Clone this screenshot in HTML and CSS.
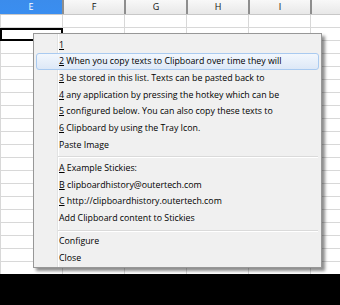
FILE: index.html
```html
<!DOCTYPE html>
<html>
<head>
<meta charset="utf-8">
<link rel="stylesheet" href="styles.css">
</head>
<body>
<div class="sheet">
  <div class="head">
    <div class="hcell sel">E</div>
    <div class="hcell">F</div>
    <div class="hcell">G</div>
    <div class="hcell">H</div>
    <div class="hcell">I</div>
    <div class="hcell"></div>
  </div>
  <div class="rows">
    <div class="row"></div>
    <div class="row"><div class="cursor"></div></div>
    <div class="row"></div><div class="row"></div><div class="row"></div><div class="row"></div>
    <div class="row"></div><div class="row"></div><div class="row"></div><div class="row"></div>
    <div class="row"></div><div class="row"></div><div class="row"></div><div class="row"></div>
    <div class="row"></div><div class="row"></div><div class="row"></div><div class="row"></div>
    <div class="row"></div><div class="row"></div>
  </div>
</div>
<div class="floor"></div>

<div class="menu">
  <div class="item"><u>1</u></div>
  <div class="item hover"><u>2</u> When you copy texts to Clipboard over time they will</div>
  <div class="item"><u>3</u> be stored in this list. Texts can be pasted back to</div>
  <div class="item"><u>4</u> any application by pressing the hotkey which can be</div>
  <div class="item"><u>5</u> configured below. You can also copy these texts to</div>
  <div class="item"><u>6</u> Clipboard by using the Tray Icon.</div>
  <div class="item">Paste Image</div>
  <div class="sep"></div>
  <div class="item"><u>A</u> Example Stickies:</div>
  <div class="item"><u>B</u> clipboardhistory@outertech.com</div>
  <div class="item"><u>C</u> http://clipboardhistory.outertech.com</div>
  <div class="item">Add Clipboard content to Stickies</div>
  <div class="sep"></div>
  <div class="item">Configure</div>
  <div class="item">Close</div>
</div>
</body>
</html>
```

FILE: styles.css
```css
html, body {
  margin: 0;
  padding: 0;
}
body {
  width: 340px;
  height: 305px;
  overflow: hidden;
  position: relative;
  background: #000;
  font-family: "Open Sans", "Noto Sans", sans-serif;
}
.sheet {
  height: 274px;
  overflow: hidden;
  background: #fff;
}
.head {
  display: flex;
  height: 14px;
  border-bottom: 1px solid #c8c8c8;
  background: linear-gradient(#f8f8f8, #e8e8e8);
}
.hcell {
  flex: 0 0 60px;
  border-left: 2px solid #8e8e8e;
  font-size: 9px;
  line-height: 14px;
  text-align: center;
  color: #111;
}
.hcell.sel {
  flex-basis: 62px;
  border-left: none;
  background: linear-gradient(#3b8cec, #3a8ef0);
  color: #fff;
}
.row {
  height: 12px;
  border-bottom: 1px solid #d8d8d8;
  background: repeating-linear-gradient(90deg, #d8d8d8 0 1px, transparent 1px 62px);
  position: relative;
}
.cursor {
  position: absolute;
  left: 0;
  top: 0;
  width: 63px;
  height: 13px;
  box-sizing: border-box;
  border: 2px solid #000;
}
.floor {
  height: 31px;
  background: #000;
}
.menu {
  position: absolute;
  left: 33px;
  top: 33px;
  width: 283px;
  padding: 2.67px 2px 0.33px 2px;
  border: 1px solid #979797;
  background: linear-gradient(90deg, #f0f0f0 0 23px, #e2e3e3 23px 24px, #ffffff 24px 25px, #f0f0f0 25px);
  box-shadow: 3px 3px 3px rgba(0, 0, 0, 0.45);
  font-size: 8.8px;
  color: #000;
}
.item {
  height: 14.67px;
  line-height: 14.67px;
  border: 1px solid transparent;
  border-radius: 3px;
  padding-left: 22px;
  white-space: nowrap;
}
.item.hover {
  border-color: #a9caf0;
  background: linear-gradient(#f2f7fd, #dde8f7);
}
.sep {
  height: 6.67px;
  margin-left: 22px;
  margin-right: 1px;
  box-sizing: border-box;
  padding-top: 3px;
  position: relative;
}
.sep::before {
  content: "";
  display: block;
  height: 1px;
  background: #dadada;
  border-bottom: 1px solid #ffffff;
}
```
